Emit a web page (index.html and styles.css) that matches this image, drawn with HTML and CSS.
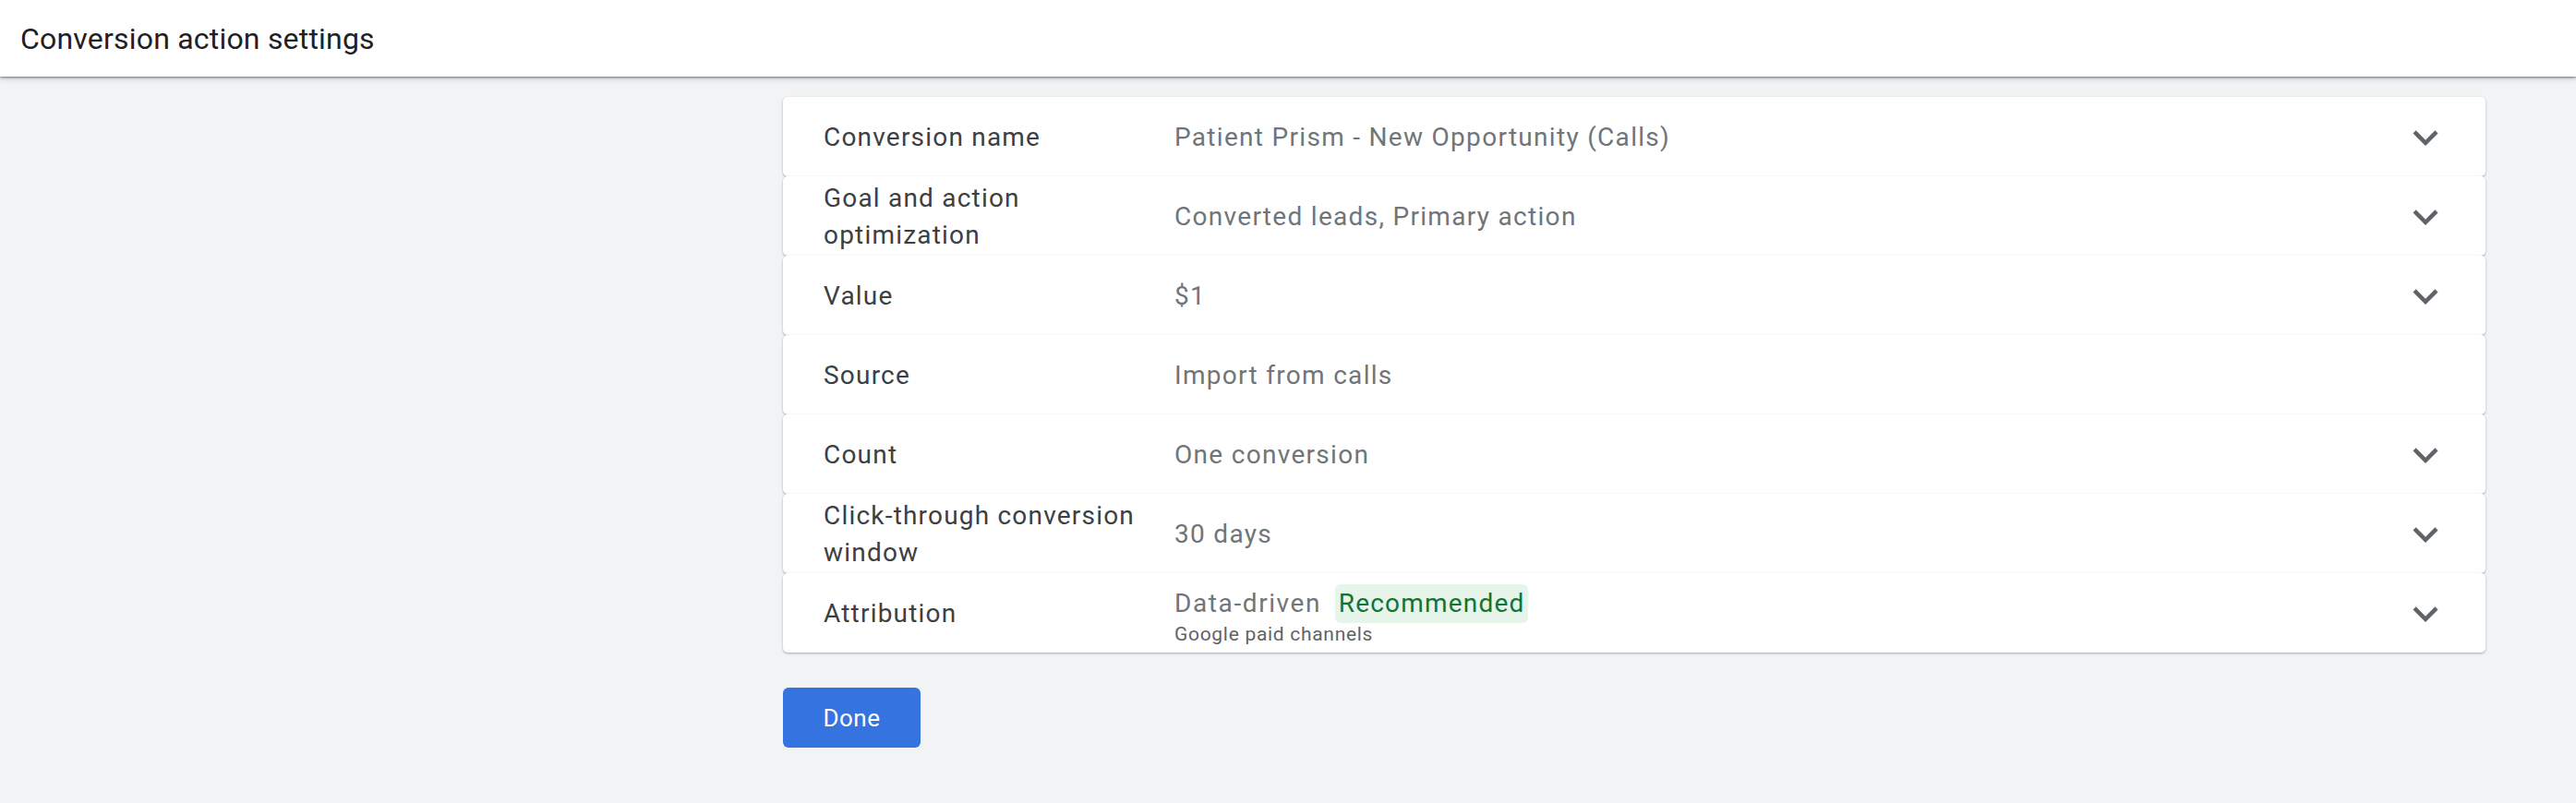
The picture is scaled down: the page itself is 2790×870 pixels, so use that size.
FILE: index.html
```html
<!DOCTYPE html>
<html lang="en">
<head>
    <meta charset="UTF-8">
    <meta name="viewport" content="width=device-width, initial-scale=1.0">
    <title>Conversion action settings</title>
    <link rel="stylesheet" href="styles.css">
</head>
<body>
    <header class="topbar">
        <h1>Conversion action settings</h1>
    </header>

    <main class="content">
        <div class="panels">
            <div class="panel">
                <div class="label">Conversion name</div>
                <div class="value">Patient Prism - New Opportunity (Calls)</div>
                <svg class="chevron" viewBox="0 0 24 24"><path d="M16.59 8.59L12 13.17 7.41 8.59 6 10l6 6 6-6z"/></svg>
            </div>
            <div class="panel">
                <div class="label">Goal and action optimization</div>
                <div class="value">Converted leads, Primary action</div>
                <svg class="chevron" viewBox="0 0 24 24"><path d="M16.59 8.59L12 13.17 7.41 8.59 6 10l6 6 6-6z"/></svg>
            </div>
            <div class="panel">
                <div class="label">Value</div>
                <div class="value">$1</div>
                <svg class="chevron" viewBox="0 0 24 24"><path d="M16.59 8.59L12 13.17 7.41 8.59 6 10l6 6 6-6z"/></svg>
            </div>
            <div class="panel">
                <div class="label">Source</div>
                <div class="value">Import from calls</div>
            </div>
            <div class="panel">
                <div class="label">Count</div>
                <div class="value">One conversion</div>
                <svg class="chevron" viewBox="0 0 24 24"><path d="M16.59 8.59L12 13.17 7.41 8.59 6 10l6 6 6-6z"/></svg>
            </div>
            <div class="panel">
                <div class="label">Click-through conversion window</div>
                <div class="value">30 days</div>
                <svg class="chevron" viewBox="0 0 24 24"><path d="M16.59 8.59L12 13.17 7.41 8.59 6 10l6 6 6-6z"/></svg>
            </div>
            <div class="panel">
                <div class="label">Attribution</div>
                <div class="value">
                    <div class="model">Data-driven <span class="chip">Recommended</span></div>
                    <div class="sub">Google paid channels</div>
                </div>
                <svg class="chevron" viewBox="0 0 24 24"><path d="M16.59 8.59L12 13.17 7.41 8.59 6 10l6 6 6-6z"/></svg>
            </div>
        </div>

        <button class="done" type="button">Done</button>
    </main>
</body>
</html>
```

FILE: styles.css
```css
body {
    margin: 0;
    background-color: #f1f3f4;
    font-family: Roboto, "Noto Sans", Arial, sans-serif;
    color: #3c4043;
}
.topbar {
    height: 83px;
    background-color: #fff;
    display: flex;
    align-items: center;
    padding-left: 22px;
    box-shadow: 0 1px 2px rgba(60, 64, 67, 0.6), 0 2px 6px rgba(60, 64, 67, 0.25);
    position: relative;
}
.topbar h1 {
    margin: 0;
    font-size: 32px;
    font-weight: 400;
    letter-spacing: 0.2px;
    color: #202124;
}
.content {
    padding: 22px 98px 40px 848px;
}
.panel {
    height: 86px;
    box-sizing: border-box;
    background-color: #fff;
    border-radius: 5px;
    box-shadow: 0 1px 2px rgba(60, 64, 67, 0.3), 0 1px 3px rgba(60, 64, 67, 0.15);
    display: flex;
    align-items: center;
    padding: 2px 38px 0 44px;
}
.label {
    width: 360px;
    padding-right: 20px;
    flex-shrink: 0;
    font-size: 28px;
    line-height: 40px;
    letter-spacing: 1.2px;
    color: #3c4043;
}
.value {
    flex: 1;
    font-size: 28px;
    line-height: 40px;
    letter-spacing: 1.3px;
    color: #70757a;
}
.model {
    line-height: 44px;
    letter-spacing: 1.6px;
}
.chip {
    display: inline-block;
    margin-left: 6px;
    padding: 0 4px;
    line-height: 42px;
    border-radius: 6px;
    background-color: #e6f4ea;
    color: #137333;
    letter-spacing: 1.2px;
}
.sub {
    font-size: 21px;
    line-height: 22px;
    letter-spacing: 0.7px;
    color: #5f6368;
}
.chevron {
    width: 54px;
    height: 54px;
    fill: #5f6368;
    flex-shrink: 0;
}
.done {
    margin-top: 38px;
    width: 149px;
    height: 65px;
    border: none;
    border-radius: 6px;
    background-color: #3574e0;
    color: #fff;
    font-family: Roboto, "Noto Sans", Arial, sans-serif;
    font-size: 26px;
    font-weight: 400;
    letter-spacing: 0.5px;
}
```
